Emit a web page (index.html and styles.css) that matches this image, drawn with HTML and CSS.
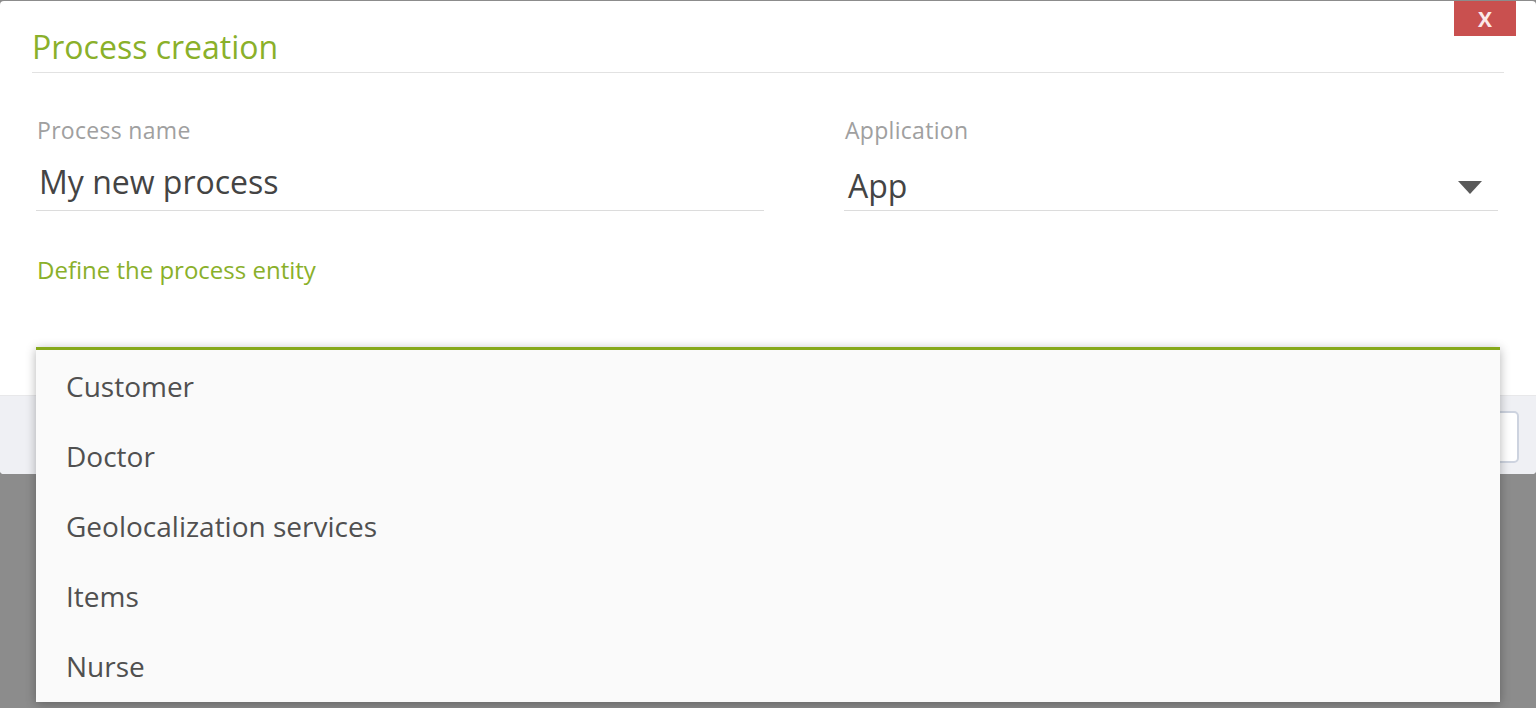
FILE: index.html
```html
<!DOCTYPE html>
<html>
<head>
<meta charset="utf-8">
<link rel="stylesheet" href="styles.css">
</head>
<body>
<div class="modal">
  <button class="close">X</button>
  <div class="modal-body">
    <h1 class="title">Process creation</h1>
    <div class="row">
      <div class="field field-name">
        <label class="label">Process name</label>
        <div class="input">My new process</div>
      </div>
      <div class="field field-app">
        <label class="label">Application</label>
        <div class="select">
          <span>App</span>
          <span class="caret"></span>
        </div>
      </div>
    </div>
    <div class="entity">
      <div class="entity-label">Define the process entity</div>
      <div class="entity-select">
        <ul class="menu">
          <li>Customer</li>
          <li>Doctor</li>
          <li>Geolocalization services</li>
          <li>Items</li>
          <li>Nurse</li>
        </ul>
      </div>
    </div>
  </div>
  <div class="footer">
    <button class="btn">Create</button>
  </div>
</div>
</body>
</html>
```
FILE: styles.css
```css
html, body {
  margin: 0;
  padding: 0;
}
body {
  background: #8c8c8c;
  height: 708px;
  overflow: hidden;
  font-family: "Open Sans", "Noto Sans", sans-serif;
}
.modal {
  margin-top: 1px;
  background: #fff;
  border-radius: 4px;
  position: relative;
}
.close {
  position: absolute;
  top: 0;
  right: 20px;
  width: 62px;
  height: 35px;
  border: 0;
  background: #c9504f;
  color: #fbe9e9;
  font-family: "Open Sans", sans-serif;
  font-weight: 700;
  font-size: 21px;
  padding: 0;
}
.modal-body {
  padding: 0 32px 48px 32px;
}
.title {
  margin: 0;
  padding: 26px 0 5px 0;
  font-size: 32px;
  line-height: 40px;
  font-weight: 400;
  color: #8ab02a;
  border-bottom: 1px solid #e2e2e2;
}
.row {
  display: flex;
  gap: 80px;
  padding: 0 6px 0 4px;
  margin-top: 43px;
}
.field-name {
  width: 728px;
}
.field-app {
  flex: 1;
}
.label {
  display: block;
  font-size: 23px;
  line-height: 28px;
  letter-spacing: 0.3px;
  color: #a0a0a0;
  padding-left: 1px;
}
.input {
  margin-top: 18px;
  font-size: 32px;
  line-height: 40px;
  color: #444;
  padding: 0 2px 8px 3px;
  border-bottom: 1px solid #dcdcdc;
}
.select {
  margin-top: 18px;
  font-size: 32px;
  line-height: 40px;
  color: #444;
  padding: 4px 16px 4px 4px;
  border-bottom: 1px solid #dcdcdc;
  display: flex;
  align-items: center;
  justify-content: space-between;
}
.caret {
  width: 0;
  height: 0;
  border-left: 12px solid transparent;
  border-right: 12px solid transparent;
  border-top: 13px solid #5a5a5a;
  margin-top: 2px;
}
.entity {
  margin-top: 45px;
  padding-left: 4px;
}
.entity-label {
  font-size: 24px;
  line-height: 28px;
  color: #8ab02a;
  padding-left: 1px;
}
.entity-select {
  position: relative;
  height: 63px;
}
.menu {
  position: absolute;
  top: 100%;
  left: 0;
  width: 1464px;
  margin: 0;
  padding: 1px 0 1px 0;
  list-style: none;
  background: #fafafa;
  border-top: 3px solid #86a91b;
  box-shadow: 0 2px 10px rgba(0, 0, 0, 0.3);
  z-index: 10;
}
.menu li {
  height: 70px;
  line-height: 70px;
  padding-left: 30px;
  font-size: 28px;
  color: #505050;
}
.footer {
  background: #eff0f4;
  border-top: 1px solid #e8e8ea;
  height: 78px;
  border-radius: 0 0 4px 4px;
  display: flex;
  justify-content: flex-end;
  align-items: flex-start;
  padding-right: 17px;
}
.btn {
  margin-top: 15px;
  width: 140px;
  height: 52px;
  background: #fff;
  border: 2px solid #cdd3df;
  border-radius: 5px;
  font-family: "Open Sans", sans-serif;
  font-size: 20px;
  color: #555;
}
```
